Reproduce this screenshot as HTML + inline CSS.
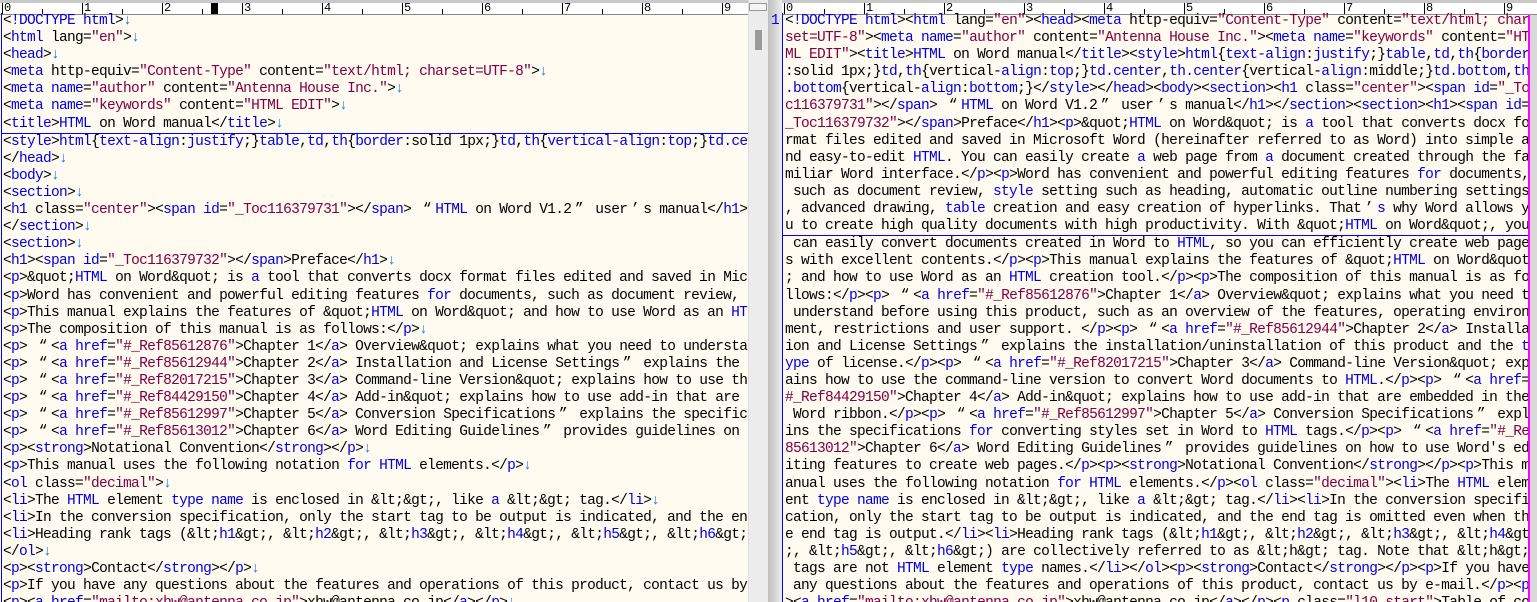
<!DOCTYPE html>
<html><head><meta charset="utf-8">
<style>
*{margin:0;padding:0;box-sizing:border-box}
body{width:1537px;height:602px;overflow:hidden;background:#d8d8d8;position:relative;font-family:"Liberation Mono","Noto Sans CJK JP",monospace;font-size:14.5px;letter-spacing:-0.7px;color:#000}
.pane{position:absolute;top:0;height:602px;background:#fffbf0;overflow:hidden}
.ruler{position:absolute;top:0;left:0;right:0;height:15px;background:#fff;border-top:3px solid #c8c8c8;border-bottom:1px solid #888;overflow:hidden;letter-spacing:0}
.ruler span{position:absolute;top:-1px;font-size:12px;line-height:12px;border-left:1px solid #000;padding-left:1px;height:12px}
.ruler i{position:absolute;bottom:0;width:1px;height:4px;background:#000}
.txt{position:absolute;top:13px;white-space:pre;line-height:17.1px;border-left:1px solid #00f}
.b{color:#0000e0}.m{color:#800040}.a{color:#1080ff}
.w{display:inline-block;width:16px;text-align:center;letter-spacing:0}
</style></head><body>

<div class="pane" style="left:0;width:748px">
<div class="ruler" id="r1">
<span style="left:2px">0</span><span style="left:82px">1</span><span style="left:162px">2</span><span style="left:242px">3</span><span style="left:322px">4</span><span style="left:402px">5</span><span style="left:482px">6</span><span style="left:562px">7</span><span style="left:642px">8</span><span style="left:722px">9</span>
<i style="left:42px;height:5px"></i><i style="left:122px;height:5px"></i><i style="left:202px;height:5px"></i><i style="left:282px;height:5px"></i><i style="left:362px;height:5px"></i><i style="left:442px;height:5px"></i><i style="left:522px;height:5px"></i><i style="left:602px;height:5px"></i><i style="left:682px;height:5px"></i>
<div style="position:absolute;left:211px;top:0;width:7px;height:11px;background:#000"></div>
</div>
<div class="txt" style="left:1px;padding-left:1px">&lt;<span class="b">!DOCTYPE html</span>&gt;<span class="a">↓</span>
&lt;<span class="b">html</span> lang=<span class="m">"en"</span>&gt;<span class="a">↓</span>
&lt;<span class="b">head</span>&gt;<span class="a">↓</span>
&lt;<span class="b">meta</span> http-equiv=<span class="m">"Content-Type"</span> content=<span class="m">"text/html; charset=UTF-8"</span>&gt;<span class="a">↓</span>
&lt;<span class="b">meta name</span>=<span class="m">"author"</span> content=<span class="m">"Antenna House Inc."</span>&gt;<span class="a">↓</span>
&lt;<span class="b">meta name</span>=<span class="m">"keywords"</span> content=<span class="m">"HTML EDIT"</span>&gt;<span class="a">↓</span>
<span style="border-bottom:1px solid #00f;display:inline-block;width:760px;margin-left:-2px;padding-left:2px">&lt;<span class="b">title</span>&gt;<span class="b">HTML</span> on Word manual&lt;/<span class="b">title</span>&gt;<span class="a">↓</span></span>
&lt;<span class="b">style</span>&gt;<span class="b">html</span>{<span class="b">text-align</span>:<span class="b">justify</span>;}<span class="b">table</span>,<span class="b">td</span>,<span class="b">th</span>{<span class="b">border</span>:solid 1px;}<span class="b">td</span>,<span class="b">th</span>{<span class="b">vertical-align</span>:<span class="b">top</span>;}<span class="b">td.ce</span>
&lt;/<span class="b">head</span>&gt;<span class="a">↓</span>
&lt;<span class="b">body</span>&gt;<span class="a">↓</span>
&lt;<span class="b">section</span>&gt;<span class="a">↓</span>
&lt;<span class="b">h1</span> class=<span class="m">"center"</span>&gt;&lt;<span class="b">span id</span>=<span class="m">"_Toc116379731"</span>&gt;&lt;/<span class="b">span</span>&gt; <span class="w">“</span><span class="b">HTML</span> on Word V1.2<span class="w">”</span> user<span class="w">’</span>s manual&lt;/<span class="b">h1</span>&gt;<span class="a">↓</span>
&lt;/<span class="b">section</span>&gt;<span class="a">↓</span>
&lt;<span class="b">section</span>&gt;<span class="a">↓</span>
&lt;<span class="b">h1</span>&gt;&lt;<span class="b">span id</span>=<span class="m">"_Toc116379732"</span>&gt;&lt;/<span class="b">span</span>&gt;Preface&lt;/<span class="b">h1</span>&gt;<span class="a">↓</span>
&lt;<span class="b">p</span>&gt;&amp;quot;<span class="b">HTML</span> on Word&amp;quot; is <span class="b">a</span> tool that converts docx format files edited and saved in Mic
&lt;<span class="b">p</span>&gt;Word has convenient and powerful editing features <span class="b">for</span> documents, such as document review,
&lt;<span class="b">p</span>&gt;This manual explains the features of &amp;quot;<span class="b">HTML</span> on Word&amp;quot; and how to use Word as an <span class="b">HT</span>
&lt;<span class="b">p</span>&gt;The composition of this manual is as follows:&lt;/<span class="b">p</span>&gt;<span class="a">↓</span>
&lt;<span class="b">p</span>&gt; <span class="w">“</span>&lt;<span class="b">a href</span>=<span class="m">"#_Ref85612876"</span>&gt;Chapter 1&lt;/<span class="b">a</span>&gt; Overview&amp;quot; explains what you need to understan
&lt;<span class="b">p</span>&gt; <span class="w">“</span>&lt;<span class="b">a href</span>=<span class="m">"#_Ref85612944"</span>&gt;Chapter 2&lt;/<span class="b">a</span>&gt; Installation and License Settings<span class="w">”</span> explains the i
&lt;<span class="b">p</span>&gt; <span class="w">“</span>&lt;<span class="b">a href</span>=<span class="m">"#_Ref82017215"</span>&gt;Chapter 3&lt;/<span class="b">a</span>&gt; Command-line Version&amp;quot; explains how to use the
&lt;<span class="b">p</span>&gt; <span class="w">“</span>&lt;<span class="b">a href</span>=<span class="m">"#_Ref84429150"</span>&gt;Chapter 4&lt;/<span class="b">a</span>&gt; Add-in&amp;quot; explains how to use add-in that are e
&lt;<span class="b">p</span>&gt; <span class="w">“</span>&lt;<span class="b">a href</span>=<span class="m">"#_Ref85612997"</span>&gt;Chapter 5&lt;/<span class="b">a</span>&gt; Conversion Specifications<span class="w">”</span> explains the specifica
&lt;<span class="b">p</span>&gt; <span class="w">“</span>&lt;<span class="b">a href</span>=<span class="m">"#_Ref85613012"</span>&gt;Chapter 6&lt;/<span class="b">a</span>&gt; Word Editing Guidelines<span class="w">”</span> provides guidelines on h
&lt;<span class="b">p</span>&gt;&lt;<span class="b">strong</span>&gt;Notational Convention&lt;/<span class="b">strong</span>&gt;&lt;/<span class="b">p</span>&gt;<span class="a">↓</span>
&lt;<span class="b">p</span>&gt;This manual uses the following notation <span class="b">for HTML</span> elements.&lt;/<span class="b">p</span>&gt;<span class="a">↓</span>
&lt;<span class="b">ol</span> class=<span class="m">"decimal"</span>&gt;<span class="a">↓</span>
&lt;<span class="b">li</span>&gt;The <span class="b">HTML</span> element <span class="b">type name</span> is enclosed in &amp;lt;&amp;gt;, like <span class="b">a</span> &amp;lt;&amp;gt; tag.&lt;/<span class="b">li</span>&gt;<span class="a">↓</span>
&lt;<span class="b">li</span>&gt;In the conversion specification, only the start tag to be output is indicated, and the en
&lt;<span class="b">li</span>&gt;Heading rank tags (&amp;lt;<span class="b">h1</span>&amp;gt;, &amp;lt;<span class="b">h2</span>&amp;gt;, &amp;lt;<span class="b">h3</span>&amp;gt;, &amp;lt;<span class="b">h4</span>&amp;gt;, &amp;lt;<span class="b">h5</span>&amp;gt;, &amp;lt;<span class="b">h6</span>&amp;gt;
&lt;/<span class="b">ol</span>&gt;<span class="a">↓</span>
&lt;<span class="b">p</span>&gt;&lt;<span class="b">strong</span>&gt;Contact&lt;/<span class="b">strong</span>&gt;&lt;/<span class="b">p</span>&gt;<span class="a">↓</span>
&lt;<span class="b">p</span>&gt;If you have any questions about the features and operations of this product, contact us by
&lt;<span class="b">p</span>&gt;&lt;<span class="b">a href</span>=<span class="m">"mailto:xhw@antenna.co.jp"</span>&gt;xhw@antenna.co.jp&lt;/<span class="b">a</span>&gt;&lt;/<span class="b">p</span>&gt;<span class="a">↓</span></div>
</div>

<div style="position:absolute;left:748px;top:0;width:20px;height:602px;background:#ececec;border-left:1px solid #ddd"></div>
<div style="position:absolute;left:749px;top:3px;width:18px;height:8px;background:#f4f4f4;border:1px solid #999"></div>
<div style="position:absolute;left:755px;top:30px;width:7px;height:20px;background:#9a9a9a"></div>
<div style="position:absolute;left:768px;top:0;width:15px;height:602px;background:linear-gradient(90deg,#bdbdbd,#f0f0f0)"></div>

<div class="pane" style="left:768px;width:769px;background:transparent">
<div class="ruler" style="left:14px">
<span style="left:2px">0</span><span style="left:82px">1</span><span style="left:162px">2</span><span style="left:242px">3</span><span style="left:322px">4</span><span style="left:402px">5</span><span style="left:482px">6</span><span style="left:562px">7</span><span style="left:642px">8</span><span style="left:722px">9</span>
<i style="left:42px;height:5px"></i><i style="left:122px;height:5px"></i><i style="left:202px;height:5px"></i><i style="left:282px;height:5px"></i><i style="left:362px;height:5px"></i><i style="left:442px;height:5px"></i><i style="left:522px;height:5px"></i><i style="left:602px;height:5px"></i><i style="left:682px;height:5px"></i>
</div>
<div style="position:absolute;left:0;top:13px;width:14px;text-align:center;color:#00f;line-height:17px">1</div>
<div style="position:absolute;left:14px;top:15px;width:746px;height:587px;background:#fffbf0"></div>
<div style="position:absolute;left:760px;top:15px;width:2px;height:587px;background:#f0f"></div>
<div class="txt" style="left:14px;padding-left:2px;width:746px;overflow:hidden">&lt;<span class="b">!DOCTYPE html</span>&gt;&lt;<span class="b">html</span> lang=<span class="m">"en"</span>&gt;&lt;<span class="b">head</span>&gt;&lt;<span class="b">meta</span> http-equiv=<span class="m">"Content-Type"</span> content=<span class="m">"text/html; char</span>
<span class="m">set=UTF-8"</span>&gt;&lt;<span class="b">meta name</span>=<span class="m">"author"</span> content=<span class="m">"Antenna House Inc."</span>&gt;&lt;<span class="b">meta name</span>=<span class="m">"keywords"</span> content=<span class="m">"HT</span>
<span class="m">ML EDIT"</span>&gt;&lt;<span class="b">title</span>&gt;<span class="b">HTML</span> on Word manual&lt;/<span class="b">title</span>&gt;&lt;<span class="b">style</span>&gt;<span class="b">html</span>{<span class="b">text-align</span>:<span class="b">justify</span>;}<span class="b">table</span>,<span class="b">td</span>,<span class="b">th</span>{<span class="b">border</span>
:solid 1px;}<span class="b">td</span>,<span class="b">th</span>{vertical-<span class="b">align</span>:<span class="b">top</span>;}<span class="b">td.center</span>,<span class="b">th.center</span>{vertical-<span class="b">align</span>:middle;}<span class="b">td.bottom</span>,<span class="b">th</span>
<span class="b">.bottom</span>{vertical-<span class="b">align</span>:<span class="b">bottom</span>;}&lt;/<span class="b">style</span>&gt;&lt;/<span class="b">head</span>&gt;&lt;<span class="b">body</span>&gt;&lt;<span class="b">section</span>&gt;&lt;<span class="b">h1</span> class=<span class="m">"center"</span>&gt;&lt;<span class="b">span id</span>=<span class="m">"_To</span>
<span class="m">c116379731"</span>&gt;&lt;/<span class="b">span</span>&gt; <span class="w">“</span><span class="b">HTML</span> on Word V1.2<span class="w">”</span> user<span class="w">’</span>s manual&lt;/<span class="b">h1</span>&gt;&lt;/<span class="b">section</span>&gt;&lt;<span class="b">section</span>&gt;&lt;<span class="b">h1</span>&gt;&lt;<span class="b">span id</span>=<span class="m">"</span>
<span class="m">_Toc116379732"</span>&gt;&lt;/<span class="b">span</span>&gt;Preface&lt;/<span class="b">h1</span>&gt;&lt;<span class="b">p</span>&gt;&amp;quot;<span class="b">HTML</span> on Word&amp;quot; is <span class="b">a</span> tool that converts docx fo
rmat files edited and saved in Microsoft Word (hereinafter referred to as Word) into simple a
nd easy-to-edit <span class="b">HTML</span>. You can easily create <span class="b">a</span> web page from <span class="b">a</span> document created through the fa
miliar Word interface.&lt;/<span class="b">p</span>&gt;&lt;<span class="b">p</span>&gt;Word has convenient and powerful editing features <span class="b">for</span> documents,
 such as document review, <span class="b">style</span> setting such as heading, automatic outline numbering settings
, advanced drawing, <span class="b">table</span> creation and easy creation of hyperlinks. That<span class="w">’</span><span class="b">s</span> why Word allows yo
<span style="border-bottom:1px solid #00f;display:inline-block;width:760px;margin-left:-2px;padding-left:2px">u to create high quality documents with high productivity. With &amp;quot;<span class="b">HTML</span> on Word&amp;quot;, you</span>
 can easily convert documents created in Word to <span class="b">HTML</span>, so you can efficiently create web page
s with excellent contents.&lt;/<span class="b">p</span>&gt;&lt;<span class="b">p</span>&gt;This manual explains the features of &amp;quot;<span class="b">HTML</span> on Word&amp;quot
; and how to use Word as an <span class="b">HTML</span> creation tool.&lt;/<span class="b">p</span>&gt;&lt;<span class="b">p</span>&gt;The composition of this manual is as fo
llows:&lt;/<span class="b">p</span>&gt;&lt;<span class="b">p</span>&gt; <span class="w">“</span>&lt;<span class="b">a href</span>=<span class="m">"#_Ref85612876"</span>&gt;Chapter 1&lt;/<span class="b">a</span>&gt; Overview&amp;quot; explains what you need to
 understand before using this product, such as an overview of the features, operating environ
ment, restrictions and user support. &lt;/<span class="b">p</span>&gt;&lt;<span class="b">p</span>&gt; <span class="w">“</span>&lt;<span class="b">a href</span>=<span class="m">"#_Ref85612944"</span>&gt;Chapter 2&lt;/<span class="b">a</span>&gt; Installat
ion and License Settings<span class="w">”</span> explains the installation/uninstallation of this product and the <span class="b">t</span>
<span class="b">ype</span> of license.&lt;/<span class="b">p</span>&gt;&lt;<span class="b">p</span>&gt; <span class="w">“</span>&lt;<span class="b">a href</span>=<span class="m">"#_Ref82017215"</span>&gt;Chapter 3&lt;/<span class="b">a</span>&gt; Command-line Version&amp;quot; expl
ains how to use the command-line version to convert Word documents to <span class="b">HTML</span>.&lt;/<span class="b">p</span>&gt;&lt;<span class="b">p</span>&gt; <span class="w">“</span>&lt;<span class="b">a href</span>=<span class="m">"</span>
<span class="m">#_Ref84429150"</span>&gt;Chapter 4&lt;/<span class="b">a</span>&gt; Add-in&amp;quot; explains how to use add-in that are embedded in the
 Word ribbon.&lt;/<span class="b">p</span>&gt;&lt;<span class="b">p</span>&gt; <span class="w">“</span>&lt;<span class="b">a href</span>=<span class="m">"#_Ref85612997"</span>&gt;Chapter 5&lt;/<span class="b">a</span>&gt; Conversion Specifications<span class="w">”</span> expla
ins the specifications <span class="b">for</span> converting styles set in Word to <span class="b">HTML</span> tags.&lt;/<span class="b">p</span>&gt;&lt;<span class="b">p</span>&gt; <span class="w">“</span>&lt;<span class="b">a href</span>=<span class="m">"#_Ref</span>
<span class="m">85613012"</span>&gt;Chapter 6&lt;/<span class="b">a</span>&gt; Word Editing Guidelines<span class="w">”</span> provides guidelines on how to use Word's ed
iting features to create web pages.&lt;/<span class="b">p</span>&gt;&lt;<span class="b">p</span>&gt;&lt;<span class="b">strong</span>&gt;Notational Convention&lt;/<span class="b">strong</span>&gt;&lt;/<span class="b">p</span>&gt;&lt;<span class="b">p</span>&gt;This m
anual uses the following notation <span class="b">for HTML</span> elements.&lt;/<span class="b">p</span>&gt;&lt;<span class="b">ol</span> class=<span class="m">"decimal"</span>&gt;&lt;<span class="b">li</span>&gt;The <span class="b">HTML</span> elem
ent <span class="b">type name</span> is enclosed in &amp;lt;&amp;gt;, like <span class="b">a</span> &amp;lt;&amp;gt; tag.&lt;/<span class="b">li</span>&gt;&lt;<span class="b">li</span>&gt;In the conversion specifi
cation, only the start tag to be output is indicated, and the end tag is omitted even when th
e end tag is output.&lt;/<span class="b">li</span>&gt;&lt;<span class="b">li</span>&gt;Heading rank tags (&amp;lt;<span class="b">h1</span>&amp;gt;, &amp;lt;<span class="b">h2</span>&amp;gt;, &amp;lt;<span class="b">h3</span>&amp;gt;, &amp;lt;<span class="b">h4</span>&amp;gt
;, &amp;lt;<span class="b">h5</span>&amp;gt;, &amp;lt;<span class="b">h6</span>&amp;gt;) are collectively referred to as &amp;lt;h&amp;gt; tag. Note that &amp;lt;h&amp;gt;
 tags are not <span class="b">HTML</span> element <span class="b">type</span> names.&lt;/<span class="b">li</span>&gt;&lt;/<span class="b">ol</span>&gt;&lt;<span class="b">p</span>&gt;&lt;<span class="b">strong</span>&gt;Contact&lt;/<span class="b">strong</span>&gt;&lt;/<span class="b">p</span>&gt;&lt;<span class="b">p</span>&gt;If you have
 any questions about the features and operations of this product, contact us by e-mail.&lt;/<span class="b">p</span>&gt;&lt;<span class="b">p</span>
&gt;&lt;<span class="b">a href</span>=<span class="m">"mailto:xhw@antenna.co.jp"</span>&gt;xhw@antenna.co.jp&lt;/<span class="b">a</span>&gt;&lt;/<span class="b">p</span>&gt;&lt;<span class="b">p</span> class=<span class="m">"l10 start"</span>&gt;Table of co</div>
</div>
</body></html>
